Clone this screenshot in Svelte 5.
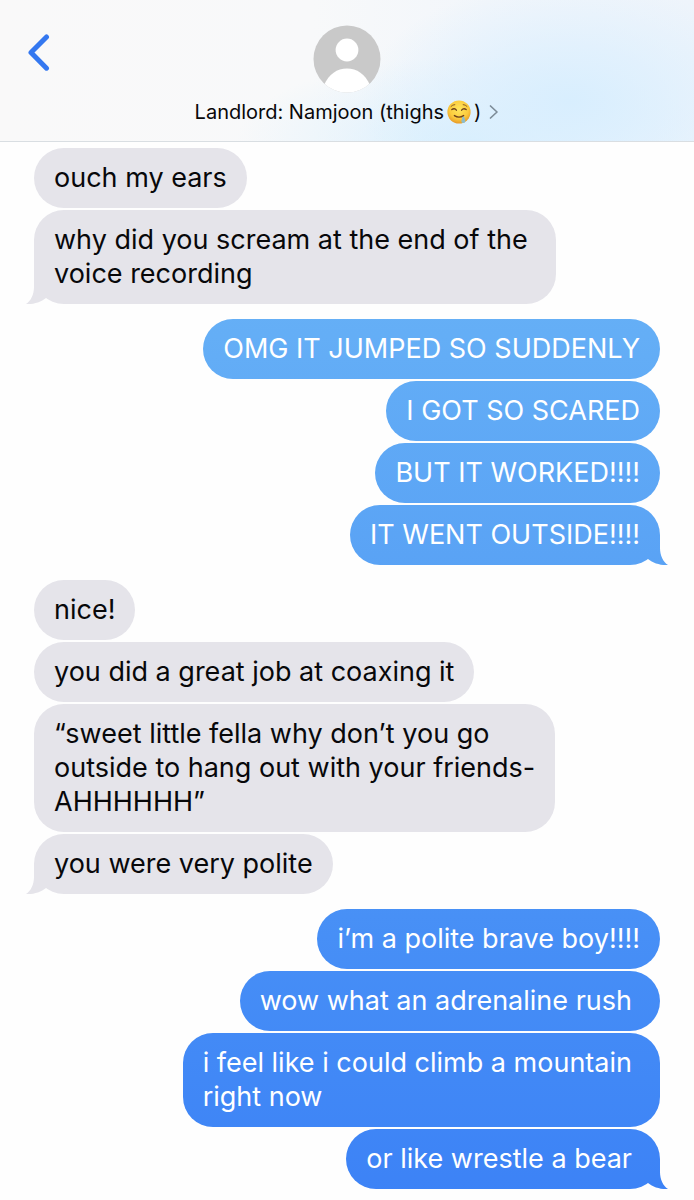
<script>
  const groups = [
    { from: 'them', messages: [{ text: 'ouch my ears' }, { text: 'why did you scream at the end of the\nvoice recording', roomy: true }] },
    {
      from: 'me',
      messages: [
        { text: 'OMG IT JUMPED SO SUDDENLY' },
        { text: 'I GOT SO SCARED' },
        { text: 'BUT IT WORKED!!!!' },
        { text: 'IT WENT OUTSIDE!!!!' }
      ]
    },
    {
      from: 'them',
      messages: [
        { text: 'nice!' },
        { text: 'you did a great job at coaxing it' },
        { text: '“sweet little fella why don’t you go\noutside to hang out with your friends-\nAHHHHHH”' },
        { text: 'you were very polite' }
      ]
    },
    {
      from: 'me',
      messages: [
        { text: 'i’m a polite brave boy!!!!' },
        { text: 'wow what an adrenaline rush', roomy: true },
        { text: 'i feel like i could climb a mountain\nright now', roomy: true },
        { text: 'or like wrestle a bear', roomy: true }
      ]
    }
  ];
</script>

<div class="screen">
  <header>
    <button class="back" aria-label="Back">
      <svg width="24" height="40" viewBox="0 0 24 40" aria-hidden="true">
        <path d="M20.5 5 5 20.5 20.5 36.2" fill="none" stroke="#3478f0" stroke-width="5" stroke-linecap="round" stroke-linejoin="round" />
      </svg>
    </button>
    <button class="contact">
      <svg class="avatar" width="68" height="68" viewBox="0 0 68 68" aria-hidden="true">
        <defs><clipPath id="disc"><circle cx="34" cy="34" r="33.5" /></clipPath></defs>
        <g clip-path="url(#disc)">
          <rect width="68" height="68" fill="#c9c9c9" />
          <circle cx="34" cy="25" r="11.4" fill="#fff" />
          <path d="M11 60C16 49 24 43.5 34 43.5S52 49 57 60L50 68H18Z" fill="#fff" />
        </g>
      </svg>
      <span class="name">
        <span>Landlord: Namjoon (thighs</span>
        <svg class="emoji" width="24" height="24" viewBox="0 0 24 24" role="img" aria-label="🤤">
          <defs>
            <radialGradient id="face" cx="50%" cy="38%" r="62%">
              <stop offset="0" stop-color="#ffe65c" />
              <stop offset=".65" stop-color="#fccb3d" />
              <stop offset="1" stop-color="#e79a28" />
            </radialGradient>
          </defs>
          <circle cx="12" cy="12" r="11.6" fill="url(#face)" />
          <g fill="none" stroke="#70421c" stroke-linecap="round">
            <path d="M4 6.4Q5.6 4.6 7.8 4.6M16.2 4.6Q18.4 4.6 20 6.4" stroke-width=".8" />
            <path d="M4.8 9.6Q7.4 7.6 9.4 10.2M14.6 10.2Q16.6 7.6 19.2 9.6" stroke-width="1.3" />
            <path d="M7.4 15.6Q12 18.6 16.6 15.6" stroke-width="1.4" />
          </g>
          <path d="M15.2 17.2C17 16.2 17.8 17.2 17.7 19.1C19 21.6 17.9 23.2 16.2 23.1C14.4 23 13.8 21.4 14.9 19.6Z" fill="#8cbccb" />
        </svg>
        <span>)</span>
        <svg class="more" width="10" height="16" viewBox="0 0 10 16" aria-hidden="true">
          <path d="M1.5 2 8 8 1.5 14" fill="none" stroke="#7d8c98" stroke-width="1.7" stroke-linecap="round" stroke-linejoin="round" />
        </svg>
      </span>
    </button>
  </header>

  <main>
    {#each groups as group}
      <section class={group.from}>
        {#each group.messages as message, i}
          <p
            class="bubble"
            class:roomy={message.roomy}
            class:last={i === group.messages.length - 1}
          >{message.text}</p>
        {/each}
      </section>
    {/each}
  </main>
</div>

<style>
  :global(body) {
    margin: 0;
    background: #fefefe;
  }

  .screen {
    font-family: Inter, "Liberation Sans", sans-serif;
    color: #08080a;
  }

  header {
    display: grid;
    grid-template-columns: 1fr auto 1fr;
    align-items: start;
    padding: 25px 26px 16px;
    border-bottom: 1px solid #d9dee2;
    background:
      radial-gradient(ellipse 30% 85% at 82% 72%, #d8eefe 0%, #dbeffeb0 45%, #e6f3fd00 100%),
      radial-gradient(ellipse 34% 60% at 68% 100%, #d6effe 0%, #dff1fd80 55%, #e6f3fd00 100%),
      linear-gradient(90deg, #f9f9f9 0%, #f8f9fa 45%, #f2f6fb 70%, #eef4fb 100%);
  }

  button {
    padding: 0;
    border: 0;
    background: none;
    color: inherit;
    font: inherit;
    cursor: pointer;
  }

  svg {
    display: block;
    flex: none;
  }

  .back {
    justify-self: start;
    padding-top: 7px;
  }

  .contact {
    display: flex;
    flex-direction: column;
    align-items: center;
    gap: 6px;
  }

  .name {
    display: flex;
    align-items: center;
    font-size: 20px;
    line-height: 26px;
    white-space: nowrap;
  }

  .emoji {
    margin: 0 3px;
  }

  .more {
    margin-left: 8px;
  }

  main {
    display: flex;
    flex-direction: column;
    gap: 15px;
    padding: 6px 34px 10px;
  }

  section {
    display: flex;
    flex-direction: column;
    align-items: flex-start;
    gap: 2px;
  }

  .me {
    align-items: flex-end;
  }

  .bubble {
    position: relative;
    box-sizing: border-box;
    max-width: 88%;
    margin: 0;
    padding: 13px 20px;
    border-radius: 30px;
    background: #e5e4ea;
    font-size: 27px;
    line-height: 34px;
    white-space: pre-line;
  }

  .roomy {
    padding-right: 28px;
  }

  .me .bubble {
    color: #fff;
    background: linear-gradient(#70baf6 0%, #64aef6 28%, #59a2f5 48%, #478ff6 78%, #3c82f6 100%) fixed;
  }

  .last::after {
    content: "";
    position: absolute;
    right: -8px;
    bottom: 0;
    width: 28px;
    height: 30px;
    background: inherit;
    clip-path: path("M0 0H20V13C20 20 23 27 28 30C20 30.5 13 28 8 24L0 24Z");
  }

  .them .last::after {
    right: auto;
    left: -8px;
    transform: scaleX(-1);
  }
</style>
